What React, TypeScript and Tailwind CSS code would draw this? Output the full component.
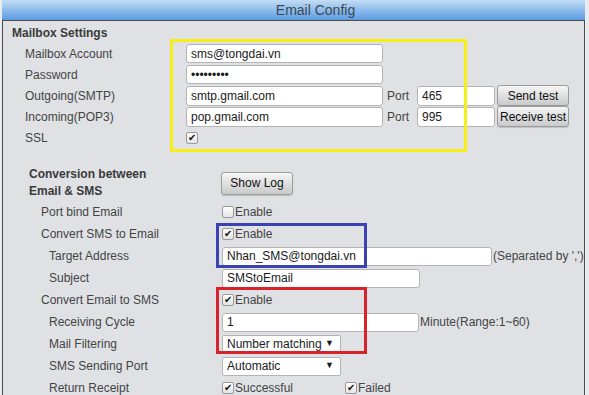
const font = { fontFamily: '"Liberation Sans", Arial, sans-serif' };

const Check = ({ on = false }: { on?: boolean }) => (
  <span className="inline-flex w-[12px] h-[12px] shrink-0 items-center justify-center rounded-[2px] border border-[#9a9a9a] bg-gradient-to-b from-white to-[#e4e4e4] text-[10px] leading-none text-[#111]">
    {on ? "✔" : ""}
  </span>
);

const Input = ({ value, w, h = "h-[19px]" }: { value: string; w: string; h?: string }) => (
  <div className={`${w} ${h} flex items-center rounded-[3px] border border-[#b4b4b4] bg-white px-[4px] text-[12px] text-[#1a1a1a] shrink-0`}>
    {value}
  </div>
);

const Btn = ({ label, w, h = "h-[21px]" }: { label: string; w: string; h?: string }) => (
  <div className={`${w} ${h} flex items-center justify-center rounded-[3px] border border-[#9c9c9c] bg-gradient-to-b from-[#f6f6f6] to-[#c9cacc] text-[12px] text-[#111] shadow-[0_1px_1px_rgba(0,0,0,0.15)] shrink-0`}>
    {label}
  </div>
);

const Select = ({ value, w }: { value: string; w: string }) => (
  <div className={`${w} h-[19px] flex items-center justify-between rounded-[2px] border border-[#b4b4b4] bg-white pl-[4px] pr-[6px] text-[12px] text-[#1a1a1a] shrink-0`}>
    <span>{value}</span>
    <span className="text-[9px]">▼</span>
  </div>
);

const MRow = ({ label, children }: { label: string; children: React.ReactNode }) => (
  <div className="flex h-[21px] items-center pl-[22px]">
    <div className="w-[161px] shrink-0">{label}</div>
    <div className="flex items-center">{children}</div>
  </div>
);

const CRow = ({ label, indent, children }: { label: string; indent: "a" | "b"; children: React.ReactNode }) => (
  <div className={`flex h-[22px] items-center ${indent === "a" ? "pl-[38px]" : "pl-[46px]"}`}>
    <div className={`${indent === "a" ? "w-[181px]" : "w-[173px]"} shrink-0`}>{label}</div>
    <div className="flex items-center whitespace-nowrap">{children}</div>
  </div>
);

export default function App() {
  return (
    <div className="relative w-[589px] h-[395px] overflow-hidden bg-[#e9ebee] text-[12px] text-[#444]" style={font}>
      <div className="ml-[2px] w-[583px]">
        <div className="h-[20px] flex items-center justify-center pl-[44px] bg-gradient-to-b from-[#c3dcf5] via-[#8dbcec] to-[#5c9be2] text-[14px] text-[#3d4855]">
          Email Config
        </div>
        <div className="h-[400px] overflow-hidden border border-[#4c4c4c] bg-[#dfe1e4]">
          <div className="h-[22px] pt-[1px] flex items-center pl-[9px] font-bold text-[#3a3a3a]">Mailbox Settings</div>
          <MRow label="Mailbox Account">
            <Input value="sms@tongdai.vn" w="w-[197px]" />
          </MRow>
          <MRow label="Password">
            <Input value="•••••••••" w="w-[197px]" />
          </MRow>
          <MRow label="Outgoing(SMTP)">
            <Input value="smtp.gmail.com" w="w-[197px]" h="h-[20px]" />
            <span className="ml-[4px] w-[30px]">Port</span>
            <Input value="465" w="w-[78px]" h="h-[20px]" />
            <span className="ml-[2px]"><Btn label="Send test" w="w-[72px]" /></span>
          </MRow>
          <MRow label="Incoming(POP3)">
            <Input value="pop.gmail.com" w="w-[197px]" h="h-[20px]" />
            <span className="ml-[4px] w-[30px]">Port</span>
            <Input value="995" w="w-[78px]" h="h-[20px]" />
            <span className="ml-[2px]"><Btn label="Receive test" w="w-[72px]" /></span>
          </MRow>
          <MRow label="SSL">
            <Check on />
          </MRow>

          <div className="mt-[17px] flex h-[36px] items-center pl-[26px]">
            <div className="w-[192px] shrink-0 font-bold leading-[17px] text-[#3a3a3a]">
              Conversion between
              <br />
              Email &amp; SMS
            </div>
            <Btn label="Show Log" w="w-[72px]" h="h-[23px]" />
          </div>

          <CRow label="Port bind Email" indent="a">
            <Check />
            <span className="ml-[1px]">Enable</span>
          </CRow>
          <CRow label="Convert SMS to Email" indent="a">
            <Check on />
            <span className="ml-[1px]">Enable</span>
          </CRow>
          <CRow label="Target Address" indent="b">
            <Input value="Nhan_SMS@tongdai.vn" w="w-[270px]" />
            <span className="ml-[1px]">(Separated by ',')</span>
          </CRow>
          <CRow label="Subject" indent="b">
            <Input value="SMStoEmail" w="w-[198px]" />
          </CRow>
          <CRow label="Convert Email to SMS" indent="a">
            <Check on />
            <span className="ml-[1px]">Enable</span>
          </CRow>
          <CRow label="Receiving Cycle" indent="b">
            <Input value="1" w="w-[197px]" />
            <span className="ml-[1px]">Minute(Range:1~60)</span>
          </CRow>
          <CRow label="Mail Filtering" indent="b">
            <Select value="Number matching" w="w-[119px]" />
          </CRow>
          <CRow label="SMS Sending Port" indent="b">
            <Select value="Automatic" w="w-[119px]" />
          </CRow>
          <CRow label="Return Receipt" indent="b">
            <div className="flex w-[123px] items-center">
              <Check on />
              <span className="ml-[1px]">Successful</span>
            </div>
            <Check on />
            <span className="ml-[1px]">Failed</span>
          </CRow>
        </div>
      </div>

      <div className="absolute left-[170px] top-[39px] w-[297px] h-[113px] border-[3px] border-[#f7ee15]" />
      <div className="absolute left-[216px] top-[223px] w-[151px] h-[45px] border-[3px] border-[#3a43b2]" />
      <div className="absolute left-[216px] top-[287px] w-[151px] h-[67px] border-[3px] border-[#d8232b]" />
    </div>
  );
}
